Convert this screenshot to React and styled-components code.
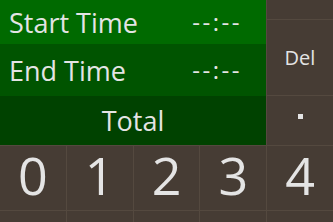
import React from "react";
import styled, { createGlobalStyle } from "styled-components";

const Global = createGlobalStyle`
  html, body { margin: 0; padding: 0; background: #463c34; }
  body { font-family: "Open Sans", "Noto Sans", sans-serif; }
`;

const LINE = "#54493f";
const KEY = "#463c34";
const TEXT = "#e4e4e4";

const Screen = styled.div`
  width: 333px;
  height: 222px;
  overflow: hidden;
  display: flex;
  flex-direction: column;
  background: ${KEY};
`;

const Top = styled.div`
  display: flex;
  height: 145px;
  flex: none;
`;

const Panel = styled.div`
  width: 266px;
  display: flex;
  flex-direction: column;
`;

const Row = styled.div`
  height: ${(p) => p.$h}px;
  background: ${(p) => p.$bg};
  display: flex;
  align-items: center;
  justify-content: ${(p) => (p.$center ? "center" : "space-between")};
  padding: ${(p) => (p.$center ? "0" : "0 24px 0 9px")};
  box-sizing: border-box;
  color: ${TEXT};
  font-size: 27px;
  line-height: 1;
`;

const Label = styled.span``;

const Value = styled.span`
  font-size: 24px;
  letter-spacing: 2.5px;
`;

const Side = styled.div`
  flex: 1;
  display: flex;
  flex-direction: column;
  border-left: 1px solid ${LINE};
`;

const SideKey = styled.div`
  height: ${(p) => p.$h}px;
  flex: none;
  border-bottom: ${(p) => (p.$last ? "none" : `1px solid ${LINE}`)};
  display: flex;
  align-items: center;
  justify-content: center;
  color: ${TEXT};
  font-size: 20px;
  line-height: 1;
`;

const Dot = styled.span`
  width: 5px;
  height: 5px;
  background: ${TEXT};
  margin-bottom: 8px;
`;

const Pad = styled.div`
  flex: 1;
  display: grid;
  grid-template-columns: repeat(5, 1fr);
  grid-auto-rows: 64px;
  gap: 1px;
  background: ${LINE};
  border-top: 1px solid ${LINE};
`;

const Digit = styled.div`
  background: ${KEY};
  display: flex;
  align-items: center;
  justify-content: center;
  color: ${TEXT};
  font-size: 52px;
  line-height: 1;
  padding-bottom: 6px;
  box-sizing: border-box;
`;

export default function App() {
  const keys = ["0", "1", "2", "3", "4"];
  return (
    <>
      <Global />
      <Screen>
        <Top>
          <Panel>
            <Row $h={44} $bg="#006a00">
              <Label>Start Time</Label>
              <Value>--:--</Value>
            </Row>
            <Row $h={52} $bg="#005400">
              <Label>End Time</Label>
              <Value>--:--</Value>
            </Row>
            <Row $h={49} $bg="#004200" $center>
              <Label>Total</Label>
            </Row>
          </Panel>
          <Side>
            <SideKey $h={19} />
            <SideKey $h={75}>Del</SideKey>
            <SideKey $h={49} $last>
              <Dot />
            </SideKey>
          </Side>
        </Top>
        <Pad>
          {keys.map((k) => (
            <Digit key={k}>{k}</Digit>
          ))}
          {[5, 6, 7, 8, 9].map((k) => (
            <Digit key={k} />
          ))}
        </Pad>
      </Screen>
    </>
  );
}
